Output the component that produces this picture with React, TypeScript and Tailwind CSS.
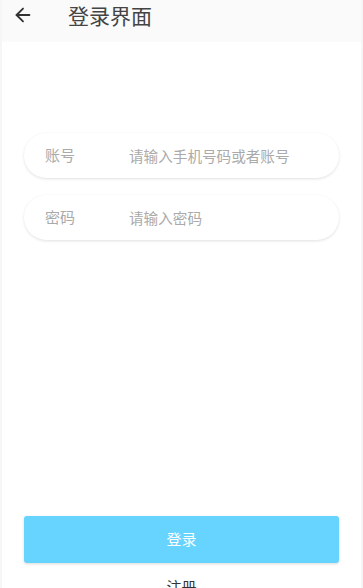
import { ArrowLeft } from 'lucide-react';

const font = { fontFamily: '"Noto Sans CJK SC", "Noto Sans", sans-serif' };

function Field({ label, placeholder, type = 'text' }: { label: string; placeholder: string; type?: string }) {
  return (
    <div className="flex h-[45px] items-center rounded-full bg-white px-[21px] shadow-[0_1px_3px_rgba(0,0,0,0.12)]">
      <span className="w-[84px] shrink-0 text-[15px] text-[#aaaaaa]">{label}</span>
      <input
        type={type}
        placeholder={placeholder}
        className="min-w-0 flex-1 bg-transparent text-[14.6px] text-[#333] outline-none placeholder:text-[#aaaaaa]"
      />
    </div>
  );
}

export default function App() {
  return (
    <div className="flex h-[588px] w-[363px] flex-col overflow-hidden border-x-2 border-[#f6f6f6] bg-white" style={font}>
      <header className="flex h-[42px] shrink-0 items-start bg-[#fafafa] pl-[10px] pt-[3px]">
        <ArrowLeft className="mt-[1px] h-[22px] w-[22px] text-[#333]" strokeWidth={2} />
        <h1 className="ml-[34px] text-[21px] leading-[24px] text-[#444]">登录界面</h1>
      </header>

      <div className="flex flex-col gap-[17px] px-[22px] pt-[91px]">
        <Field label="账号" placeholder="请输入手机号码或者账号" />
        <Field label="密码" placeholder="请输入密码" type="password" />
      </div>

      <div className="mt-auto px-[22px]">
        <button className="flex h-[47px] w-full items-center justify-center rounded-[3px] bg-[#66d4ff] text-[15px] text-white shadow-[0_1px_3px_rgba(0,0,0,0.15)]">
          登录
        </button>
        <div className="mt-[14px] h-[11px] overflow-visible text-center text-[15px] leading-[20px] text-[#333]">注册</div>
      </div>
    </div>
  );
}
